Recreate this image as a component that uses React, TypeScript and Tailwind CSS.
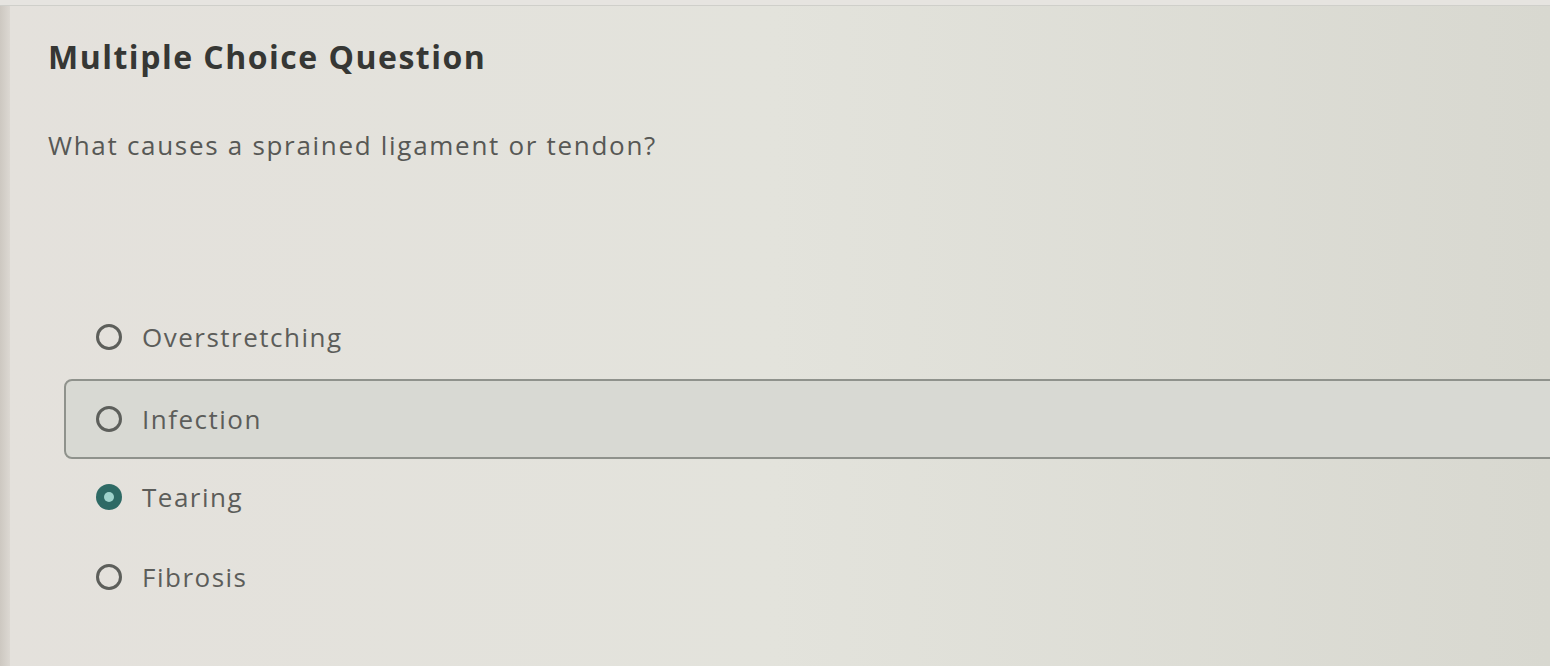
import React from "react";

const options = [
  { label: "Overstretching", selected: false, hovered: false },
  { label: "Infection", selected: false, hovered: true },
  { label: "Tearing", selected: true, hovered: false },
  { label: "Fibrosis", selected: false, hovered: false },
];

function Radio({ selected }: { selected: boolean }) {
  if (selected) {
    return (
      <span className="flex h-[26px] w-[26px] shrink-0 items-center justify-center rounded-full bg-[#2e6a65]">
        <span className="h-[10px] w-[10px] rounded-full bg-[#9fd3cc]" />
      </span>
    );
  }
  return (
    <span className="h-[26px] w-[26px] shrink-0 rounded-full border-[3px] border-[#5d5f5b]" />
  );
}

export default function App() {
  return (
    <div
      className="relative h-[666px] w-[1550px] overflow-hidden bg-gradient-to-r from-[#e4e1dc] via-[#e3e3dc] to-[#d8d8d0] text-[#3b3c39]"
      style={{ fontFamily: "'Open Sans', Lato, sans-serif" }}
    >
      <div className="h-[6px] border-b border-[#cfcfca] bg-[#e6e4e0]" />
      <div className="flex h-[660px]">
        <div className="w-[10px] shrink-0 bg-gradient-to-r from-[#cdc8c1] to-[#dcd8d2]" />
        <div className="flex flex-1 flex-col pl-[38px]">
          <h1 className="mt-[31px] text-[32px] font-bold leading-[40px] tracking-[1.5px] text-[#363734]">
            Multiple Choice Question
          </h1>
          <p className="mt-[52px] text-[26px] leading-[32px] tracking-[1.7px] text-[#575855]">
            What causes a sprained ligament or tendon?
          </p>
          <div className="mt-[136px] flex flex-col">
            {options.map((o) => (
              <div
                key={o.label}
                className={
                  o.hovered
                    ? "-mr-[40px] ml-[16px] mt-[2px] -mb-[2px] flex h-[80px] items-center gap-[20px] rounded-[8px] border-2 border-[#8f928c] bg-[#d8d9d3] pl-[30px]"
                    : "ml-[16px] flex h-[80px] items-center gap-[20px] pl-[32px]"
                }
              >
                <Radio selected={o.selected} />
                <span className="text-[26px] leading-[32px] tracking-[1.5px] text-[#5c5d5a]">{o.label}</span>
              </div>
            ))}
          </div>
        </div>
      </div>
    </div>
  );
}
